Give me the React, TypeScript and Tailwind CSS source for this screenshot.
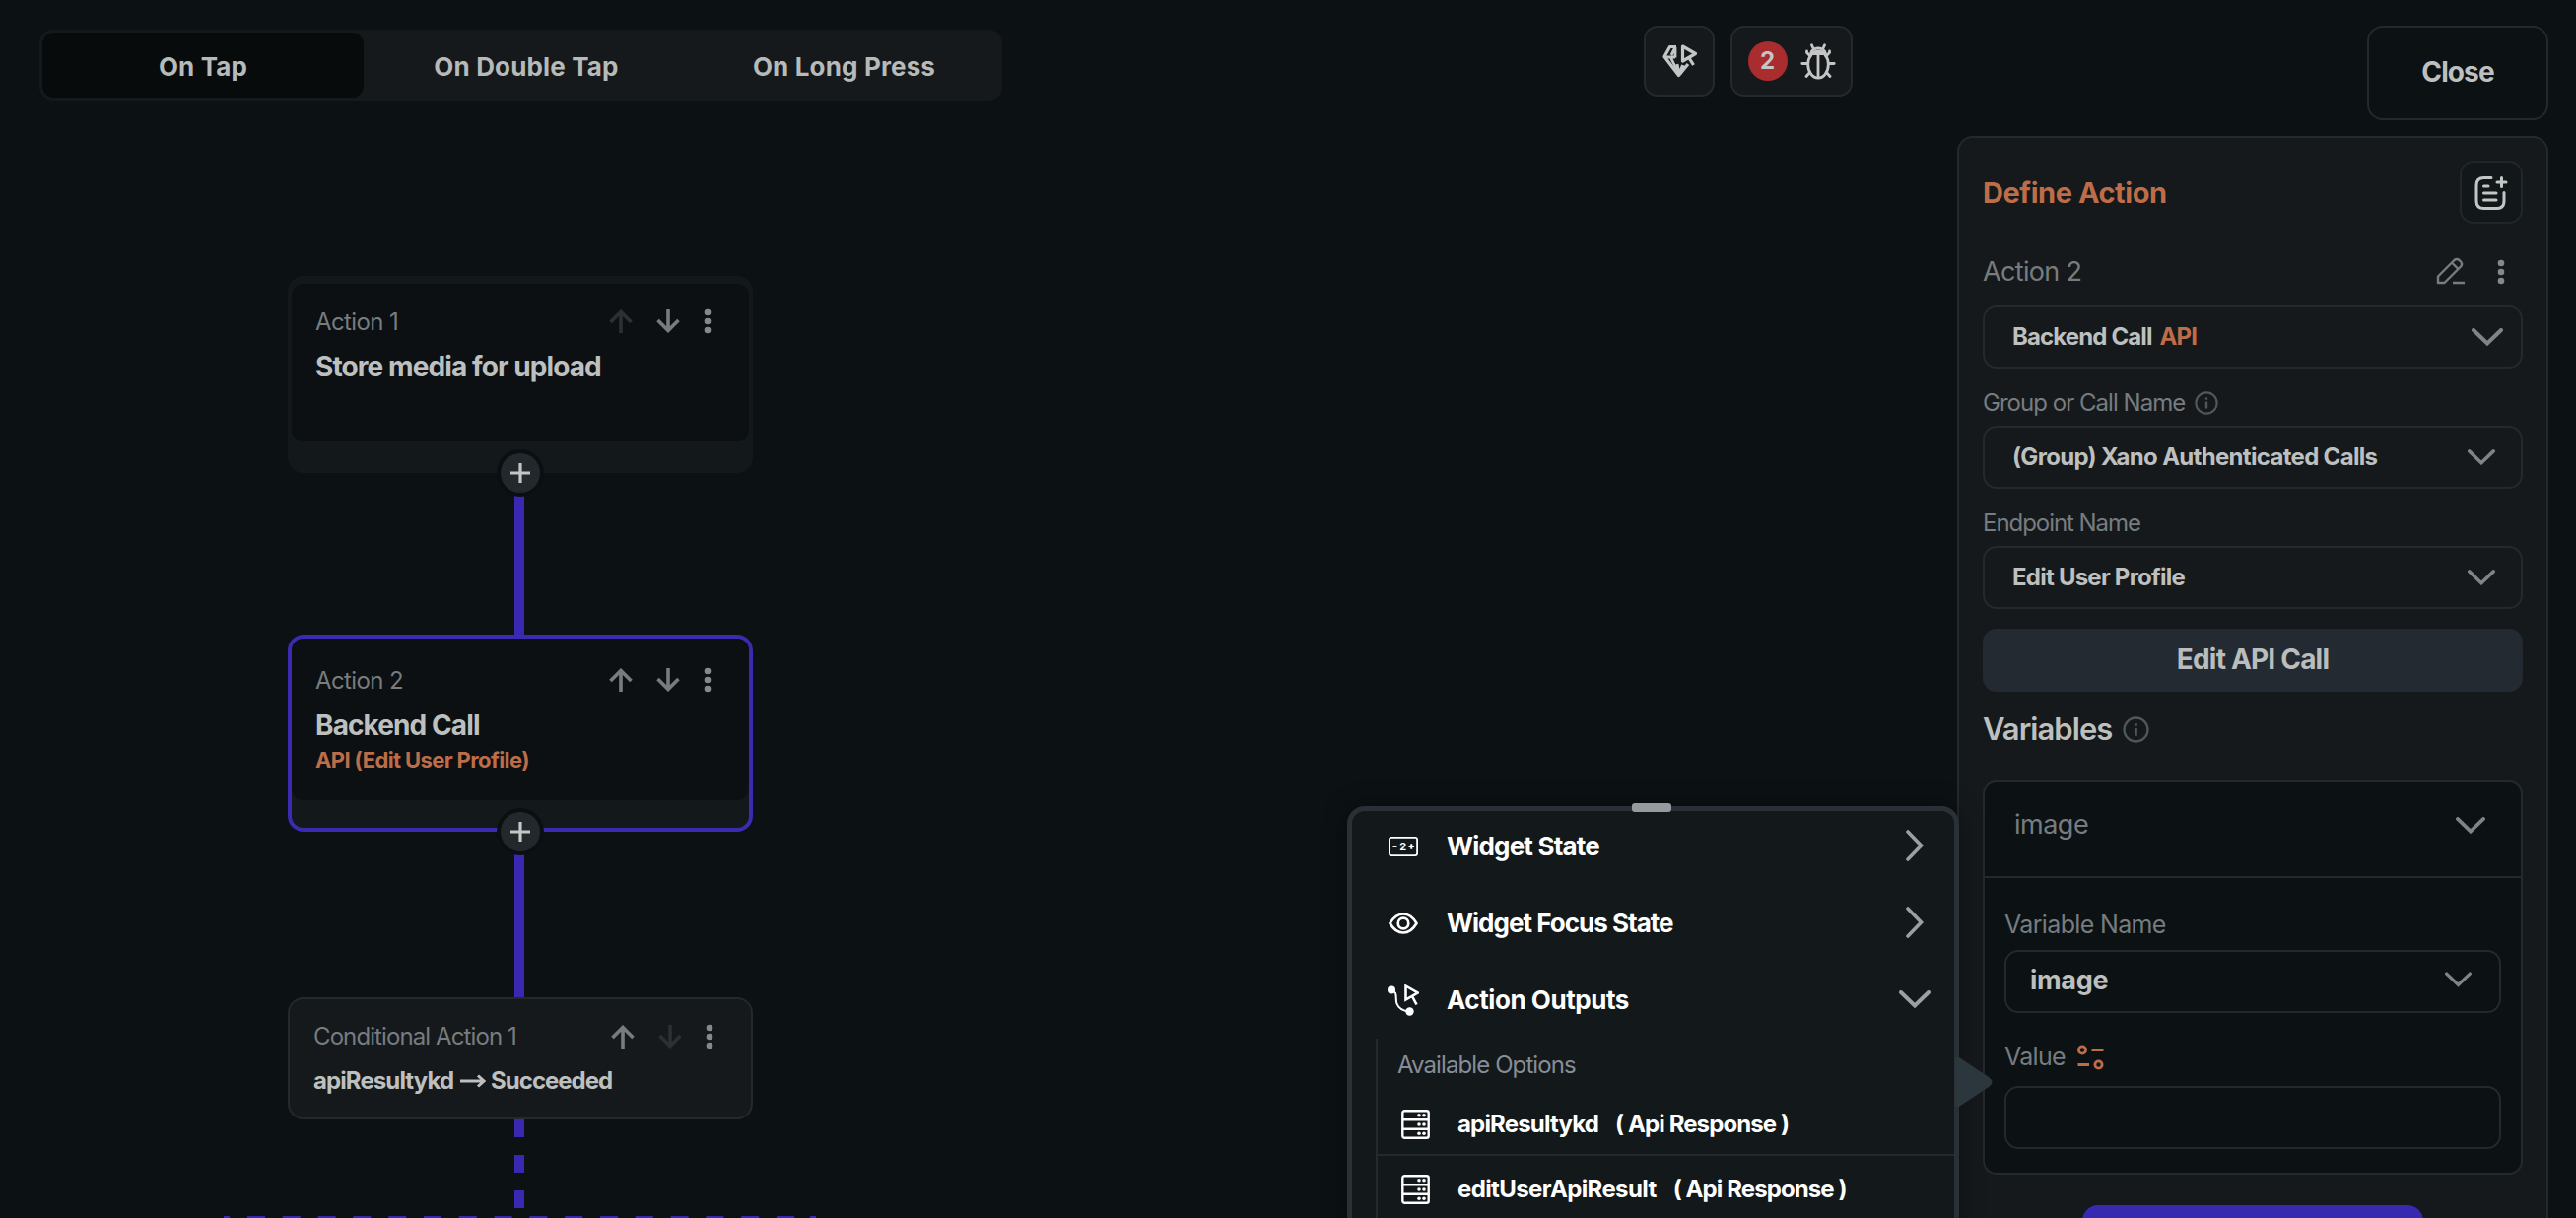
import type { ReactNode } from 'react'
import clsx from 'clsx'

const tabs = [
  { label: 'On Tap', width: 'w-[326px]', active: true },
  { label: 'On Double Tap', width: 'w-[330px]' },
  { label: 'On Long Press', width: 'w-[315px]' },
]

/* ---------- Icons ---------- */

function Chevron({ className }: { className?: string }) {
  return (
    <svg viewBox="0 0 32 18" fill="none" stroke="currentColor" strokeWidth="4" className={className}>
      <path d="M2 2 L16 15.5 L30 2" strokeLinecap="round" />
    </svg>
  )
}

function ChevronRight() {
  return (
    <svg viewBox="0 0 18 32" fill="none" stroke="currentColor" strokeWidth="3.6" className="h-8 w-[18px] text-[#9aa0a3]">
      <path d="M2 2 L15.5 16 L2 30" strokeLinecap="round" />
    </svg>
  )
}

function Arrow({ down, muted }: { down?: boolean; muted?: boolean }) {
  return (
    <svg
      viewBox="0 0 24 24"
      fill="none"
      stroke="currentColor"
      strokeWidth="3.6"
      className={clsx('size-6', down && 'rotate-180', muted ? 'text-[#2b3033]' : 'text-[#777c7f]')}
    >
      <path d="M12 24 V3 M1.5 13 L12 2.5 L22.5 13" />
    </svg>
  )
}

function Dots() {
  return (
    <svg viewBox="0 0 8 26" fill="currentColor" className="h-[26px] w-2 text-[#85898b]">
      <circle cx="4" cy="4" r="3.3" />
      <circle cx="4" cy="13" r="3.3" />
      <circle cx="4" cy="22" r="3.3" />
    </svg>
  )
}

function InfoIcon({ className }: { className?: string }) {
  return (
    <svg viewBox="0 0 26 26" fill="none" stroke="currentColor" strokeWidth="2.3" className={className}>
      <circle cx="13" cy="13" r="11.5" />
      <path d="M13 11.5 V19" strokeWidth="2.6" />
      <path d="M13 7 V9.4" strokeWidth="2.6" />
    </svg>
  )
}

function GemIcon() {
  return (
    <svg viewBox="0 0 35 34" fill="none" stroke="currentColor" strokeWidth="3.2" strokeLinejoin="round" className="h-[34px] w-[35px]">
      <path d="M14 2.5 L7.5 2.500 L2 12.500 L16.500 31.500 L26 20" />
      <path d="M13 3 V13.500 M2 13 H13 M8.500 13.500 L16.500 30 M13 3 L9 11 M15 20 L17 30 L20.500 21 M23 22 L18 30" strokeWidth="2.800" />
      <path d="M20.500 2 L33.500 9.500 L20.500 17 Z M26.500 13 L31.500 21" />
    </svg>
  )
}

function BugIcon() {
  return (
    <svg viewBox="0 0 36 37" fill="none" stroke="currentColor" strokeWidth="2.8" strokeLinecap="round" className="h-[37px] w-9">
      <ellipse cx="18" cy="21.5" rx="10.3" ry="13.5" />
      <path d="M10.5 12 Q10.5 7.5 14 6 Q18 3.8 22 6 Q25.5 7.5 25.5 12" />
      <path d="M11.5 10.5 H24.5 M18 11 V34" />
      <path d="M13 5 L11.5 1.8 M23 5 L24.5 1.8 M10 13 L6.5 9.5 L6.5 8 M26 13 L29.5 9.5 L29.5 8 M7.5 20.5 H1.8 M28.5 20.5 H34.2 M9.5 29.5 L6 33.5 M26.5 29.5 L30 33.5" />
    </svg>
  )
}

function NoteAddIcon() {
  return (
    <svg viewBox="0 0 34 35" fill="none" stroke="currentColor" strokeWidth="3" strokeLinecap="round" className="h-[35px] w-[34px]">
      <path d="M17 2.5 H9.5 Q2 2.5 2 10 V26 Q2 33.5 9.5 33.5 H22.5 Q30 33.5 30 26 V17.5" />
      <path d="M27.5 2.5 V11.5 M23 7 H32" />
      <path d="M9.5 11 H14 M9.5 18 H22 M9.5 25 H22" />
    </svg>
  )
}

function EditIcon() {
  return (
    <svg viewBox="0 0 30 28" fill="none" stroke="currentColor" strokeWidth="2.4" strokeLinejoin="round" className="mb-0.5 h-7 w-[30px] text-[#777c7f]">
      <path d="M2 26 V19.5 L18.5 3 Q21 0.8 23.5 3 L25 4.5 Q27.2 7 25 9.5 L8.5 26 Z" />
      <path d="M16 5.5 L22.5 12 M17 26 H29" />
    </svg>
  )
}

function WidgetStateIcon() {
  return (
    <svg viewBox="0 0 30 20" fill="none" stroke="white" strokeWidth="1.8" className="h-5 w-[30px]">
      <rect x="0.9" y="0.9" width="28.2" height="18.2" rx="2" />
      <path d="M4.5 10 H8.5 M20.5 10 H26 M23.25 7.25 V12.75" strokeWidth="2" />
      <text x="14.8" y="14" textAnchor="middle" fontSize="11" fontWeight="700" fill="white" stroke="none">
        2
      </text>
    </svg>
  )
}

function EyeIcon() {
  return (
    <svg viewBox="0 0 30 22" fill="none" stroke="white" strokeWidth="2.7" className="h-[22px] w-[30px]">
      <path d="M1.5 11 Q7 1.5 15 1.5 Q23 1.5 28.5 11 Q23 20.5 15 20.5 Q7 20.5 1.5 11 Z" strokeLinejoin="round" />
      <circle cx="15" cy="11" r="5.3" />
    </svg>
  )
}

function ActionOutputIcon() {
  return (
    <svg viewBox="0 0 32 32" fill="none" stroke="white" className="size-8">
      <circle cx="4" cy="5.5" r="4" fill="white" stroke="none" />
      <circle cx="22.5" cy="27.5" r="4.2" fill="white" stroke="none" />
      <path d="M4 5.500 C11 8 7.500 14 9.500 19.500 Q12 26.500 22 27.500" strokeWidth="2" />
      <path d="M18.500 1.500 L30.500 8.500 L18.500 15.500 Z M25 12 L29.500 20.500" strokeWidth="2.6" />
    </svg>
  )
}

function ServerIcon() {
  return (
    <svg viewBox="0 0 29 30" fill="none" stroke="white" strokeWidth="2.4" className="h-[30px] w-[29px]">
      <rect x="1.3" y="1.3" width="26.4" height="27.4" rx="2" />
      <path d="M1.3 10.3 H27.7 M1.3 19.7 H27.7" />
      <g fill="white" stroke="none">
        <circle cx="18" cy="5.8" r="1.8" />
        <circle cx="23" cy="5.8" r="1.8" />
        <circle cx="18" cy="15" r="1.8" />
        <circle cx="23" cy="15" r="1.8" />
        <circle cx="18" cy="24.2" r="1.8" />
        <circle cx="23" cy="24.2" r="1.8" />
      </g>
    </svg>
  )
}

function VariableIcon() {
  return (
    <svg viewBox="0 0 27 26" fill="none" stroke="currentColor" strokeWidth="2.8" className="h-[26px] w-[27px] text-[#bd6d48]">
      <circle cx="5" cy="5.5" r="3.6" />
      <circle cx="21.5" cy="20.5" r="3.6" />
      <path d="M14.5 5.5 H26.5 M0.5 20.5 H12" />
    </svg>
  )
}

/* ---------- Flow canvas ---------- */

function NodeControls({ upMuted, downMuted }: { upMuted?: boolean; downMuted?: boolean }) {
  return (
    <div className="flex items-center">
      <Arrow muted={upMuted} />
      <div className="w-6" />
      <Arrow down muted={downMuted} />
      <div className="w-6" />
      <Dots />
    </div>
  )
}

function AddButton({ className }: { className: string }) {
  return (
    <div className={clsx('absolute flex size-12 items-center justify-center rounded-full bg-[#0b0f11]', className)}>
      <div className="flex size-10 items-center justify-center rounded-full bg-[#22282c]">
        <svg viewBox="0 0 20 20" stroke="#c3c6c5" strokeWidth="3.2" className="size-5">
          <path d="M10 0 V20 M0 10 H20" />
        </svg>
      </div>
    </div>
  )
}

interface ActionNodeProps {
  label: string
  title: string
  detail?: string
  selected?: boolean
  first?: boolean
  className: string
}

function ActionNode({ label, title, detail, selected, first, className }: ActionNodeProps) {
  return (
    <div
      className={clsx(
        'absolute h-[200px] w-[472px] rounded-[16px] border-4 bg-[#13191b]',
        selected ? 'border-[#3a2bb0]' : 'border-[#13181a]',
        className
      )}
    >
      <div className={clsx('rounded-[12px] bg-[#0c1012] px-6', first ? 'mt-1 h-40 pt-[22px]' : 'h-[164px] pt-[26px]')}>
        <div className="flex h-8 items-center justify-between pr-[14px] leading-8">
          <span className="pt-px text-[24px] tracking-[-0.6px] text-[#777c7f]">{label}</span>
          <NodeControls upMuted={first} />
        </div>
        <p className="mt-3 text-[28px] leading-9 font-bold tracking-[-0.9px] text-[#bdc0bf]">{title}</p>
        {detail && <p className="mt-px text-[22px] leading-8 font-bold tracking-[-0.62px] text-[#bd6d48]">{detail}</p>}
      </div>
    </div>
  )
}

function FlowCanvas() {
  return (
    <section className="absolute inset-0">
      {/* Connectors */}
      <svg className="absolute inset-0 size-full" stroke="#3a27b2" fill="none">
        <path d="M527 500 V645 M527 866 V1012" strokeWidth="10" />
        <path d="M527 1136 V1228" strokeWidth="10" strokeDasharray="18 18" />
        <path d="M251 1236 H806" strokeWidth="4" strokeDasharray="18 17.8" />
        <path d="M227 1236 H233 M822 1236 H828" strokeWidth="4" />
      </svg>

      <ActionNode label="Action 1" title="Store media for upload" first className="top-[280px] left-[292px]" />
      <ActionNode
        label="Action 2"
        title="Backend Call"
        detail="API (Edit User Profile)"
        selected
        className="top-[644px] left-[292px]"
      />

      {/* Conditional */}
      <div className="absolute top-[1012px] left-[292px] h-[124px] w-[472px] rounded-[16px] border-2 border-[#24292b] bg-[#15191b] px-6 pt-[22px]">
        <div className="flex h-8 items-center justify-between pr-[14px] pb-px leading-8">
          <span className="pt-px text-[24px] tracking-[-0.9px] text-[#777c7f]">Conditional Action 1</span>
          <NodeControls downMuted />
        </div>
        <div className="mt-[13px] flex h-8 items-center text-[24px] leading-8 font-bold text-[#bdc0bf]">
          <span className="tracking-[-0.9px]">apiResultykd</span>
          <svg viewBox="0 0 26 14" fill="none" stroke="currentColor" strokeWidth="3" className="ml-[7px] h-[14px] w-[26px]">
            <path d="M0 7 H24 M18 1.5 L24 7 L18 12.5" />
          </svg>
          <span className="ml-[5px] tracking-[-1px]">Succeeded</span>
        </div>
      </div>

      <AddButton className="top-[456px] left-[504px]" />
      <AddButton className="top-[820px] left-[504px]" />
    </section>
  )
}

/* ---------- Define Action panel ---------- */

function SelectBox({ children, chevron, className }: { children: ReactNode; chevron: string; className?: string }) {
  return (
    <div className={clsx('flex h-16 items-center justify-between rounded-[14px] border-2 border-[#24292b]', className)}>
      {children}
      <Chevron className={clsx('text-[#808486]', chevron)} />
    </div>
  )
}

function ActionPanel() {
  return (
    <aside className="mt-4 h-[1200px] w-[600px] rounded-[16px] border-2 border-[#24292b] bg-[#15191b] px-6 pt-[23px]">
      <div className="flex h-16 items-center justify-between">
        <h2 className="pt-px text-[29px] font-bold tracking-[-0.45px] text-[#bd6d48]">Define Action</h2>
        <button className="flex size-16 items-center justify-center rounded-[14px] border-2 border-[#212628] bg-[#121719] text-[#c3c6c5]">
          <NoteAddIcon />
        </button>
      </div>

      <div className="mt-6 mb-[9px] flex h-[50px] items-center">
        <span className="text-[27px] tracking-[-0.65px] text-[#777c7f]">Action 2</span>
        <div className="ml-auto flex items-center gap-8 pr-[18px]">
          <EditIcon />
          <Dots />
        </div>
      </div>

      <SelectBox className="pr-[18px] pl-[28px]" chevron="h-[18px] w-8">
        <p className="flex-1 text-[24px] font-bold tracking-[-0.87px] text-[#bdc0bf]">
          Backend Call <span className="ml-[3px] tracking-[-0.8px] text-[#bd6d48]">API</span>
        </p>
      </SelectBox>

      <div className="flex h-[58px] items-center gap-[10px] pt-3">
        <span className="text-[24px] tracking-[-0.97px] text-[#777c7f]">Group or Call Name</span>
        <InfoIcon className="size-6 text-[#515659]" />
      </div>
      <SelectBox className="pr-[26px] pl-[28px]" chevron="h-4 w-7">
        <span className="text-[24px] font-bold tracking-[-0.69px] text-[#bdc0bf]">(Group) Xano Authenticated Calls</span>
      </SelectBox>

      <div className="flex h-[58px] items-center pt-3">
        <span className="text-[24px] tracking-[-1.05px] text-[#777c7f]">Endpoint Name</span>
      </div>
      <SelectBox className="pr-[26px] pl-[28px]" chevron="h-4 w-7">
        <span className="text-[24px] font-bold tracking-[-0.76px] text-[#bdc0bf]">Edit User Profile</span>
      </SelectBox>

      <button className="mt-5 h-16 w-full rounded-[14px] bg-[#242a32] pb-0.5 text-[28px] font-bold tracking-[-0.8px] text-[#b9bdbd]">
        Edit API Call
      </button>

      <div className="flex h-[90px] items-center gap-[11px] pb-[13px]">
        <h3 className="text-[31px] font-semibold tracking-[-0.95px] text-[#bdc0bf]">Variables</h3>
        <InfoIcon className="size-[27px] text-[#515659]" />
      </div>

      {/* Variable card */}
      <div className="rounded-[14px] border-2 border-[#24292b] bg-[#0c1113]">
        <div className="flex h-[97px] items-center justify-between border-b-2 border-[#24292b] pr-9 pb-2 pl-[30px]">
          <span className="text-[27px] tracking-[-0.5px] text-[#777c7f]">image</span>
          <Chevron className="h-[17px] w-[30px] text-[#808486]" />
        </div>
        <div className="px-5 pb-6">
          <div className="flex h-[73px] items-center pt-[23px]">
            <span className="text-[25px] tracking-[-0.65px] text-[#777c7f]">Variable Name</span>
          </div>
          <SelectBox className="pr-7 pl-6" chevron="mb-1 h-4 w-[27px]">
            <span className="pb-px text-[27px] font-bold tracking-[-0.3px] text-[#bdc0bf]">image</span>
          </SelectBox>
          <div className="flex h-[74px] items-center gap-3 pt-4">
            <span className="text-[25px] tracking-[-0.7px] text-[#777c7f]">Value</span>
            <VariableIcon />
          </div>
          <div className="h-16 rounded-[14px] border-2 border-[#24292b]" />
        </div>
      </div>

      <div className="mx-auto mt-[31px] h-16 w-[346px] rounded-[16px] bg-[#372ab0]" />
    </aside>
  )
}

/* ---------- Variable source popup ---------- */

function SourceRow({ icon, label, tracking, open }: { icon: ReactNode; label: string; tracking: string; open?: boolean }) {
  return (
    <div className="flex h-[78px] items-center pl-9">
      <div className="flex w-8 justify-center">{icon}</div>
      <span className={clsx('ml-7 flex-1 pb-0.5 text-[26px] font-bold text-white', tracking)}>{label}</span>
      <div className="mr-6 flex w-8 justify-center pb-0.5">
        {open ? <Chevron className="h-[18px] w-8 text-[#9aa0a3]" /> : <ChevronRight />}
      </div>
    </div>
  )
}

function OptionRow({ name, tracking, className }: { name: string; tracking: string; className?: string }) {
  return (
    <div className={clsx('flex items-center pl-6 text-[24px] font-bold text-white', className)}>
      <ServerIcon />
      <span className={clsx('ml-7', tracking)}>{name}</span>
      <span className="ml-[17px] tracking-[-0.9px]">( Api Response )</span>
    </div>
  )
}

function SourcePopup() {
  return (
    <div className="absolute top-[818px] left-[1367px] h-[440px] w-[621px] rounded-[18px] border-[5px] border-[#2a3136] bg-[#13181a] shadow-[0_0_24px_rgba(0,0,0,0.35)]">
      <div className="absolute -top-[8px] left-[284px] h-[9px] w-10 rounded-[3px] bg-[#939b9f]" />
      <svg viewBox="0 0 38 50" className="absolute top-[250px] left-[612px] h-[50px] w-[38px]">
        <path d="M0 0 H4 L34 20 Q41 25 34 30 L4 50 H0 Z" fill="#2c363d" />
      </svg>

      <div className="-mt-[3px]">
        <SourceRow icon={<WidgetStateIcon />} label="Widget State" tracking="tracking-[-0.8px]" />
        <SourceRow icon={<EyeIcon />} label="Widget Focus State" tracking="tracking-[-0.98px]" />
        <SourceRow icon={<ActionOutputIcon />} label="Action Outputs" tracking="tracking-[-0.45px]" open />
      </div>
      <div className="ml-[24px] border-l-2 border-[#24292c]">
        <p className="h-[62px] pt-[9px] pl-5 text-[24px] leading-9 tracking-[-0.9px] text-[#868d97]">Available Options</p>
        <OptionRow name="apiResultykd" tracking="tracking-[-0.82px]" className="h-[57px] border-b-2 border-[#24292c] pb-[5px]" />
        <OptionRow name="editUserApiResult" tracking="tracking-[-0.62px]" className="h-[67px]" />
      </div>
    </div>
  )
}

export default function App() {
  return (
    <div className="relative h-[1236px] w-[2614px] overflow-hidden bg-[#0c1113] font-['Inter',sans-serif]">
      <FlowCanvas />

      <header className="relative flex h-[122px] items-start pr-[28px] pl-[40px]">
        <div className="mt-[30px] flex h-[72px] w-[977px] rounded-[14px] bg-[#15191b] p-[3px]">
          {tabs.map((tab) => (
            <button
              key={tab.label}
              className={clsx(
                'rounded-[12px] pt-[3px] text-[26px] font-bold tracking-[0.15px] text-[#b6bab9]',
                tab.width,
                tab.active && 'bg-[#080b0c]'
              )}
            >
              {tab.label}
            </button>
          ))}
        </div>

        <div className="mt-[26px] ml-[651px] flex gap-[16px] text-[#c3c6c5]">
          <button className="flex h-[72px] w-[72px] items-center justify-center rounded-[14px] border-2 border-[#25292b] bg-[#15191b]">
            <GemIcon />
          </button>
          <button className="flex h-[72px] w-[124px] items-center justify-center gap-[13px] rounded-[14px] border-2 border-[#25292b] bg-[#15191b]">
            <span className="flex size-10 items-center justify-center rounded-full bg-[#a92c2e] text-[24px] font-bold">2</span>
            <BugIcon />
          </button>
        </div>

        <button className="mt-[26px] ml-auto h-24 w-[184px] rounded-[16px] border-2 border-[#25292b] pb-0.5 text-[28px] font-bold tracking-[-0.9px] text-[#bdc0bf]">
          Close
        </button>
      </header>

      <main className="relative flex justify-end pr-[28px]">
        <ActionPanel />
      </main>

      <SourcePopup />
    </div>
  )
}
